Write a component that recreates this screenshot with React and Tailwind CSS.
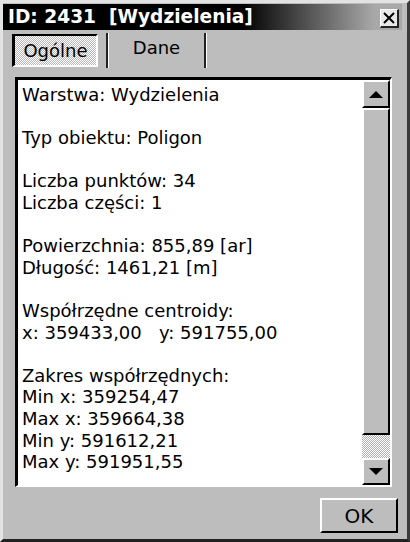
import React from 'react'

const lines = [
  'Warstwa: Wydzielenia',
  '',
  'Typ obiektu: Poligon',
  '',
  'Liczba punktów: 34',
  'Liczba części: 1',
  '',
  'Powierzchnia: 855,89 [ar]',
  'Długość: 1461,21 [m]',
  '',
  'Współrzędne centroidy:',
  'x: 359433,00   y: 591755,00',
  '',
  'Zakres współrzędnych:',
  'Min x: 359254,47',
  'Max x: 359664,38',
  'Min y: 591612,21',
  'Max y: 591951,55',
]

function Arrow({ down }) {
  return (
    <svg width="14" height="7" viewBox="0 0 14 7">
      {down ? <polygon points="0,0 14,0 7,7" fill="#000" /> : <polygon points="0,7 14,7 7,0" fill="#000" />}
    </svg>
  )
}

export default function App() {
  return (
    <div className="w-[410px] h-[542px] bg-[#bdbdbd] border-[3px] border-t-[#e2e2e2] border-l-[#e2e2e2] border-r-[#3a3a3a] border-b-[#222] flex flex-col text-black font-['DejaVu_Sans',sans-serif] overflow-hidden">
      {/* Title bar */}
      <div className="mt-[1px] mr-[5px] h-[26px] flex items-center justify-between pl-[5px] pr-[3px] bg-[linear-gradient(90deg,#000_0%,#000_60%,#a8a8a8_93%)]">
        <span className="text-white font-bold text-[18.6px] leading-none whitespace-pre">ID: 2431  [Wydzielenia]</span>
        <div className="w-[19px] h-[19px] mt-[3px] bg-[#e8e8e8] border-t border-l border-white border-r-2 border-b-2 border-r-[#222] border-b-[#222] flex items-center justify-center">
          <svg width="12" height="12" viewBox="0 0 12 12">
            <path d="M1 1 L11 11 M11 1 L1 11" stroke="#000" strokeWidth="2" />
          </svg>
        </div>
      </div>

      {/* Tabs */}
      <div className="h-[38px] flex items-start pl-[9px]">
        <div className="mt-[4px] w-[86px] h-[33px] border-t-2 border-l-[3px] border-t-black border-l-black border-r-2 border-b-2 border-r-white border-b-white bg-[repeating-conic-gradient(#ffffff_0_25%,#b8b8b8_0_50%)] bg-[length:2px_2px] flex items-center justify-center text-[18px] leading-none">
          Ogólne
        </div>
        <div className="ml-[8px] mt-[3px] h-[35px] w-[3px] border-l-2 border-[#222] bg-white" />
        <div className="w-[95px] h-[38px] flex items-center justify-center text-[18px] leading-none pb-[3px]">Dane</div>
        <div className="mt-[3px] h-[35px] w-[3px] border-l-2 border-[#222] bg-white" />
      </div>

      {/* Info box */}
      <div className="mt-[9px] ml-[12px] mr-[15px] h-[410px] border-t-[3px] border-l-[3px] border-t-black border-l-black border-r-2 border-b-2 border-r-white border-b-white flex">
        <div className="flex-1 bg-white pt-[4px] pl-[4px] text-[18px] leading-[21.6px] whitespace-pre">
          {lines.map((l, i) => (
            <div key={i} className="h-[21.6px]">{l}</div>
          ))}
        </div>
        {/* Scrollbar */}
        <div className="w-[28px] flex flex-col bg-[#bdbdbd]">
          <div className="h-[28px] border-t-2 border-l-2 border-white border-r-2 border-b-2 border-r-black border-b-black flex items-center justify-center">
            <Arrow />
          </div>
          <div className="h-[327px] border-t-2 border-l-2 border-white border-r-2 border-b-2 border-r-black border-b-black" />
          <div className="h-[23px] bg-[repeating-conic-gradient(#ffffff_0_25%,#b0b0b0_0_50%)] bg-[length:2px_2px]" />
          <div className="h-[27px] border-t-2 border-l-2 border-white border-r-2 border-b-2 border-r-black border-b-black flex items-center justify-center">
            <Arrow down />
          </div>
        </div>
      </div>

      {/* Footer */}
      <div className="mt-[11px] mr-[9px] flex justify-end">
        <div className="w-[78px] h-[35px] border-t-2 border-l-2 border-white border-r-2 border-b-2 border-r-black border-b-black flex items-center justify-center text-[20px] leading-none">
          OK
        </div>
      </div>
    </div>
  )
}
